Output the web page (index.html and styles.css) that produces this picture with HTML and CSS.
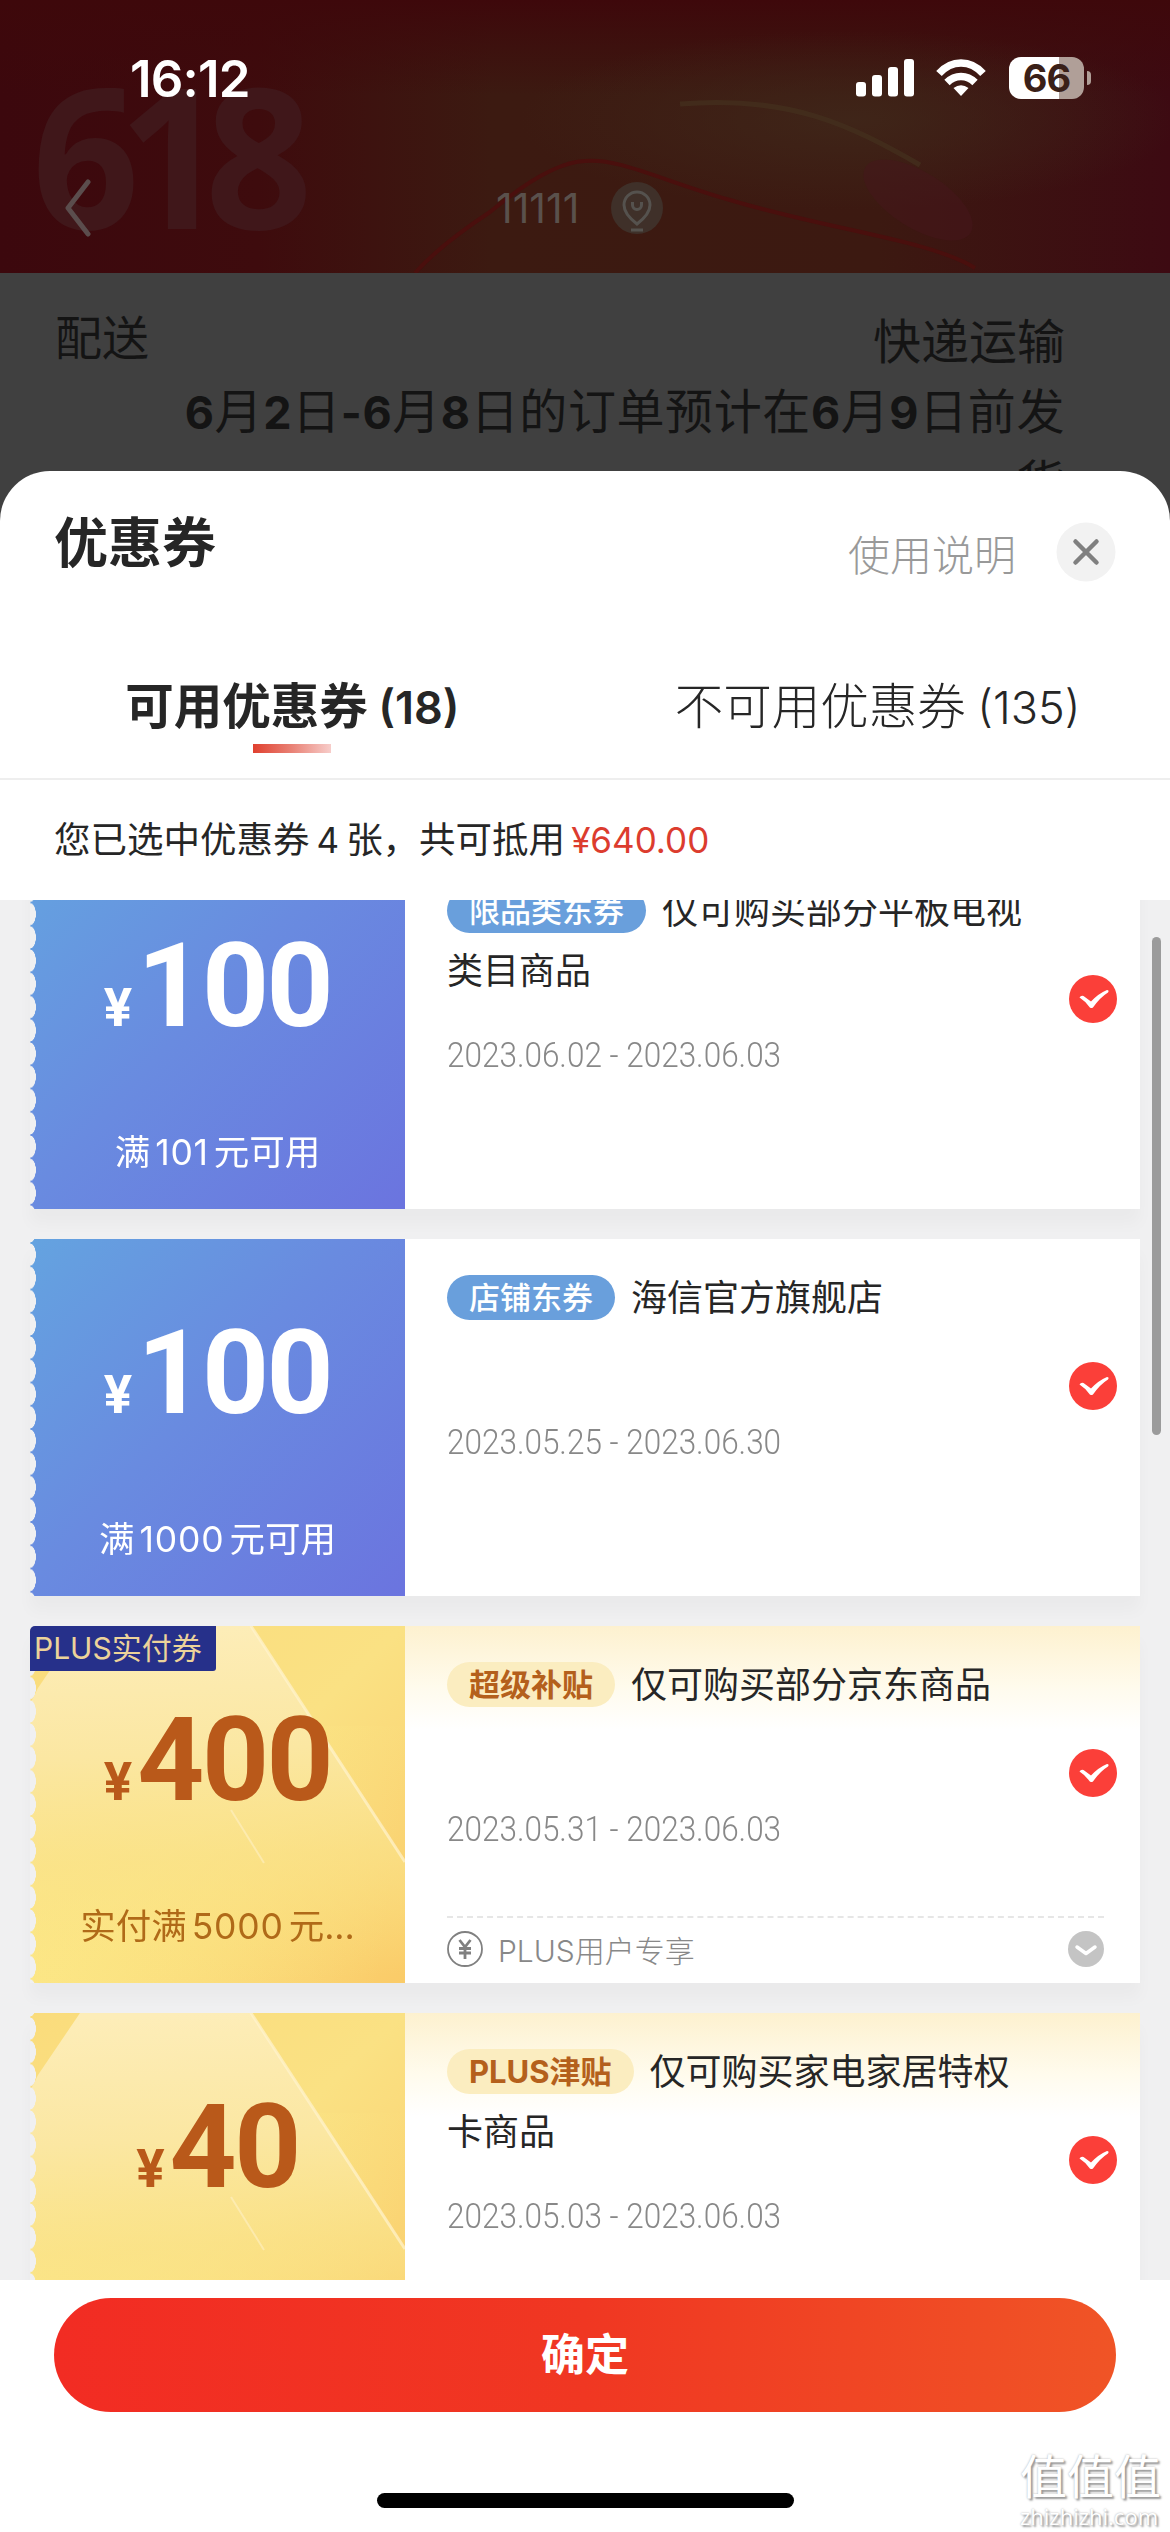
FILE: index.html
```html
<!DOCTYPE html>
<html lang="zh-CN">
<head>
<meta charset="utf-8">
<title>优惠券</title>
<link rel="stylesheet" href="styles.css">
</head>
<body>
<svg width="0" height="0" class="defs">
  <defs>
    <linearGradient id="gold" x1="0" y1="0" x2="1" y2="1"><stop offset="0" stop-color="#fadc7c"/><stop offset=".5" stop-color="#fae183"/><stop offset="1" stop-color="#facb68"/></linearGradient>
    <linearGradient id="beam" x1=".45" y1="0" x2=".5" y2="1"><stop offset="0" stop-color="#fdedb8"/><stop offset=".35" stop-color="#fbe7a2"/><stop offset=".65" stop-color="#fae28a" stop-opacity=".7"/><stop offset="1" stop-color="#fbe482" stop-opacity="0"/></linearGradient>
    <linearGradient id="low" x1="0" y1=".2" x2="1" y2=".3"><stop offset="0" stop-color="#fce786"/><stop offset=".4" stop-color="#fce684" stop-opacity=".6"/><stop offset="1" stop-color="#fce684" stop-opacity="0"/></linearGradient>
    <symbol id="check" viewBox="0 0 48 48"><circle cx="24" cy="24" r="24" fill="#fb3f39"/><path d="M10.500 22.500Q12 20 14.500 21L22 26.500Q29.500 18.500 38 15Q40.500 15 39 17.500Q31 22.500 24 32.500Q21.500 34 20 31.500Q16 26 10.500 22.500Z" fill="#fff"/></symbol>
    <symbol id="goldart" viewBox="0 0 375 357" preserveAspectRatio="none">
      <rect width="375" height="357" fill="url(#gold)"/><rect y="100" width="375" height="257" fill="url(#low)"/>
      <path d="M50 0H221L375 236V357H0V78L8 62Z" fill="url(#beam)"/>
      <path d="M221 0L375 236" stroke="#fff3cf" stroke-opacity=".7" stroke-width="3" fill="none"/>
      <path d="M201 184L234 237" stroke="#fff3cf" stroke-opacity=".5" stroke-width="2" fill="none"/>
    </symbol>
  </defs>
</svg>

<header class="top">
  <svg class="art" width="1170" height="273" viewBox="0 0 1170 273">
    <defs>
      <linearGradient id="red" x1="0" y1="0" x2="1" y2="0"><stop offset="0" stop-color="#3c080d"/><stop offset=".22" stop-color="#3e0b0d"/><stop offset=".42" stop-color="#3c1a11"/><stop offset=".75" stop-color="#3c1911"/><stop offset="1" stop-color="#3d0a12"/></linearGradient>
      <linearGradient id="shade" x1="0" y1="0" x2="0" y2="1"><stop offset="0" stop-color="#3e080b"/><stop offset=".35" stop-color="#3e080b" stop-opacity="0"/></linearGradient>
      <radialGradient id="glow"><stop offset="0" stop-color="#40291b" stop-opacity=".75"/><stop offset="1" stop-color="#40291b" stop-opacity="0"/></radialGradient>
    </defs>
    <rect width="1170" height="273" fill="url(#red)"/>
    <rect width="1170" height="273" fill="url(#shade)"/>
    <ellipse cx="850" cy="120" rx="330" ry="90" fill="url(#glow)"/>
    <path d="M415 273Q440 245 490 212Q550 162 585 161C620 158 660 180 730 200C830 230 930 240 975 268" fill="none" stroke="#4a0f0d" stroke-width="4"/>
    <path d="M680 104C790 95 850 125 920 165" fill="none" stroke="#44301e" stroke-width="5" stroke-opacity=".7"/>
    <ellipse cx="918" cy="200" rx="62" ry="28" fill="#45161b" opacity=".5" transform="rotate(32 918 200)"/>
  </svg>
  <div class="promo">618</div>
  <div class="status">
    <span class="time">16:12</span>
    <span class="sys">
      <svg width="58" height="38" viewBox="0 0 58 38" fill="#fff"><rect y="23" width="10" height="14.500" rx="3"/><rect x="16" y="16" width="10" height="21.500" rx="3"/><rect x="32" y="8" width="10" height="29.500" rx="3"/><rect x="48" width="10" height="37.500" rx="3"/></svg>
      <svg class="wifi" width="50" height="38" viewBox="0 0 50 38" fill="none" stroke="#fff" stroke-width="7.500"><path d="M3 14.500Q12.500 4 25 4T47 14.500"/><path d="M11 23.500Q17 17.500 25 17.500T39 23.500"/><path d="M25 37L17.500 29Q25 23.500 32.500 29Z" fill="#fff" stroke="none"/></svg>
      <span class="battery">66</span><i class="cap"></i>
    </span>
  </div>
  <div class="nav">
    <svg width="26" height="58" viewBox="0 0 26 58" fill="none" stroke="#5b4d4d" stroke-width="5" stroke-linecap="round" stroke-linejoin="round"><path d="M23 3L3 29L23 55"/></svg>
    <div class="place"><span>11111</span>
      <svg width="54" height="54" viewBox="0 0 54 54" fill="none" stroke="#55524e" stroke-width="3"><circle cx="27" cy="27" r="26" fill="#3f3029" stroke="none"/><path d="M27 43Q14 33 14 24A13 13 0 0 1 40 24Q40 33 27 43Z"/><path d="M22.500 21V24A4.500 4.500 0 0 0 31.500 24V21M21 49H33"/></svg>
    </div>
  </div>
</header>

<section class="delivery">
  <div class="row"><span class="lbl">配送</span><span>快递运输</span></div>
  <p><b>6</b>月<b>2</b>日<b>-6</b>月<b>8</b>日的订单预计在<b>6</b>月<b>9</b>日前发<br>货</p>
</section>

<main class="sheet">
  <div class="head">
    <h1>优惠券</h1>
    <span class="help">使用说明</span>
    <svg width="60" height="60" viewBox="0 0 60 60"><circle cx="30" cy="30" r="29.500" fill="#f2f2f2"/><path d="M19.500 19.500L40.500 40.500M40.500 19.500L19.500 40.500" stroke="#808080" stroke-width="4.500" stroke-linecap="round"/></svg>
  </div>
  <nav class="tabs">
    <div class="tab on"><span>可用优惠券<i> (18)</i></span></div>
    <div class="tab"><span>不可用优惠券<i> (135)</i></span></div>
  </nav>
  <p class="sum">您已选中优惠券<i>4</i>张，共可抵用<em>¥640.00</em></p>

  <div class="list">
    <article class="card">
      <div class="face blue"><div class="money"><small>¥</small>100</div><div class="cond">满<i>101</i>元可用</div></div>
      <div class="info">
        <h2><span class="tag">限品类东券</span>仅可购买部分平板电视<br>类目商品</h2>
        <p class="date"><span>2023.06.02 - 2023.06.03</span></p>
        <svg class="pick"><use href="#check"/></svg>
      </div>
    </article>
    <article class="card">
      <div class="face blue"><div class="money"><small>¥</small>100</div><div class="cond">满<i>1000</i>元可用</div></div>
      <div class="info">
        <h2><span class="tag">店铺东券</span>海信官方旗舰店</h2>
        <p class="date"><span>2023.05.25 - 2023.06.30</span></p>
        <svg class="pick"><use href="#check"/></svg>
      </div>
    </article>
    <article class="card plus">
      <div class="face gold"><svg class="goldbg"><use href="#goldart"/></svg><div class="money"><small>¥</small>400</div><div class="cond">实付满<i>5000</i>元...</div></div>
      <span class="ribbon">PLUS实付券</span>
      <div class="info">
        <h2><span class="tag">超级补贴</span>仅可购买部分京东商品</h2>
        <p class="date"><span>2023.05.31 - 2023.06.03</span></p>
        <svg class="pick"><use href="#check"/></svg>
        <div class="member">
          <svg width="36" height="36" viewBox="0 0 36 36" fill="none" stroke="#808080"><circle cx="18" cy="18" r="17" stroke-width="1.800"/><path d="M12.500 9L18 16L23.500 9M12 17.500H24M12 22H24M18 16V28" stroke-width="2.800"/></svg>
          <span>PLUS用户专享</span>
          <svg width="36" height="36" viewBox="0 0 36 36"><circle cx="18" cy="18" r="18" fill="#c4c4c4"/><path d="M9 16L18 22.500L27 16" fill="none" stroke="#fff" stroke-width="3.500" stroke-linecap="round" stroke-linejoin="round"/></svg>
        </div>
      </div>
    </article>
    <article class="card plus">
      <div class="face gold"><svg class="goldbg"><use href="#goldart"/></svg><div class="money"><small>¥</small>40</div><div class="cond">满<i>400</i>元可用</div></div>
      <div class="info">
        <h2><span class="tag">PLUS津贴</span>仅可购买家电家居特权<br>卡商品</h2>
        <p class="date"><span>2023.05.03 - 2023.06.03</span></p>
        <svg class="pick"><use href="#check"/></svg>
      </div>
    </article>
    <i class="scroll"></i>
  </div>

  <footer class="foot">
    <button class="ok">确定</button>
    <i class="home"></i>
    <div class="mark"><b>值值值</b><span>zhizhizhi.com</span></div>
  </footer>
</main>
</body>
</html>
```
FILE: styles.css
```css
* { box-sizing: border-box; margin: 0; padding: 0; }
i, em { font-style: normal; }
body { width: 1170px; height: 2532px; overflow: hidden; background: #404040; color: #262626; font-family: Inter, "Noto Sans CJK SC", sans-serif; }
.defs { position: absolute; }

.top { position: relative; height: 273px; overflow: hidden; }
.art { position: absolute; left: 0; top: 0; }
.promo { position: absolute; left: 32px; top: 58px; font: 700 196px/190px "Open Sans", sans-serif; letter-spacing: -22px; color: #40171a; transform: scaleX(.96); transform-origin: left; }
.status { position: relative; display: flex; justify-content: space-between; align-items: center; height: 156px; padding: 0 79px 0 130px; color: #fff; }
.time { font-weight: 600; font-size: 51px; letter-spacing: -.8px; }
.sys { display: flex; align-items: center; }
.wifi { margin: 0 23px 0 22px; }
.battery { width: 75px; height: 42px; border-radius: 12px; background: linear-gradient(90deg, #fff 67%, #b09f98 67%); color: #3a2018; font-weight: 700; font-size: 38px; line-height: 42px; text-align: center; letter-spacing: -1px; }
.cap { width: 4px; height: 14px; margin-left: 3px; border-radius: 0 5px 5px 0; background: #b09f98; }
.nav { position: relative; display: flex; align-items: center; height: 104px; padding-left: 65px; }
.place { display: flex; align-items: center; gap: 31px; margin-left: 405px; font: 400 41px/50px Inter, sans-serif; color: #5a514c; }
.place span { letter-spacing: 0; }

.delivery { height: 198px; padding: 34px 105px 0 55px; overflow: hidden; color: #141414; font-size: 48px; line-height: 70px; text-align: right; }
.row { display: flex; justify-content: space-between; }
.lbl { margin-top: -4px; font-size: 47px; }
.delivery b { font-weight: 700; font-size: 45px; }
.delivery p { letter-spacing: .6px; white-space: nowrap; }

.sheet { display: flex; flex-direction: column; height: 2061px; border-radius: 50px 50px 0 0; background: #fff; overflow: hidden; }
.head { display: flex; align-items: center; height: 162px; padding: 0 54px 0 54px; }
.head h1 { flex: 1; font-weight: 700; font-size: 54px; line-height: 80px; margin-top: -16px; }
.help { margin-right: 40px; font-weight: 300; font-size: 42px; color: #999; }
.tabs { display: flex; height: 147px; border-bottom: 2px solid #eee; }
.tab { position: relative; flex: 1; text-align: center; font-size: 48.5px; line-height: 148px; font-weight: 300; white-space: nowrap; }
.tab i { font-size: 45px; margin-left: -1px; }
.on { font-weight: 700; }
.on i { font-weight: 600; }
.on::after { content: ""; position: absolute; left: 253px; top: 111px; width: 78px; height: 9px; background: linear-gradient(90deg, #e0402f, #e98276 50%, #f7cdca); }
.sum { height: 120px; padding-left: 54px; font-size: 36.5px; line-height: 121px; white-space: nowrap; }
.sum i { font-size: 35px; margin: 0 7px; }
.sum em { margin-left: 6px; font-size: 35px; color: #dc3c2e; }

.list { position: relative; height: 1380px; padding: 0 30px; overflow: hidden; background: #f0f0f1; }
.card { position: relative; display: flex; height: 357px; margin-bottom: 30px; box-shadow: 0 15px 15px rgba(0,0,0,.028); }
.card:first-child { margin-top: -48px; }
.face { position: relative; width: 375px; padding-top: 60px; text-align: center; color: #fff; -webkit-mask: radial-gradient(ellipse 6px 11.5px at 0 50%, transparent 94%, #000 100%) 0 4px / 100% 23.25px repeat-y; mask: radial-gradient(ellipse 6px 11.5px at 0 50%, transparent 94%, #000 100%) 0 4px / 100% 23.25px repeat-y; }
.blue { background: linear-gradient(133deg, #64a3e0, #698be0 45%, #6b74df); }
.gold { color: #b9591a; }
.goldbg { position: absolute; left: 0; top: 0; width: 375px; height: 357px; }
.money { position: relative; font: 700 117px/148px Roboto, sans-serif; letter-spacing: -2.5px; }
.money small { font-size: 53px; letter-spacing: 5px; }
.cond { position: relative; margin-top: 51px; font-size: 35.5px; line-height: 40px; white-space: nowrap; }
.cond i { margin: 0 5px; letter-spacing: .8px; }
.gold .cond { color: #b06a18; }
.info { position: relative; flex: 1; padding: 29px 36px 0 42px; background: #fff; }
.plus .info { background: linear-gradient(#fdf1cf, rgba(255,250,232,.8) 17%, #fff 29%) #fff; }
.info h2 { height: 130px; font-weight: 400; font-size: 36px; line-height: 60px; white-space: nowrap; }
.tag { display: inline-block; height: 45px; margin-right: 16px; padding: 0 22px; border-radius: 23px; vertical-align: 0; background: #699fdc; color: #fff; font-weight: 500; font-size: 31px; line-height: 45px; vertical-align: 2px; }
.plus .tag { background: #fbedc0; color: #b4601c; font-weight: 700; }
.date { height: 40px; margin-top: 25px; font: 300 35px/40px Roboto, sans-serif; color: #888; white-space: nowrap; }
.date span { display: inline-block; transform: scaleX(.9); transform-origin: left; }
.pick { position: absolute; left: 664px; top: 123px; width: 48px; height: 48px; }
.ribbon { position: absolute; left: 0; top: 0; width: 186px; height: 45px; padding-left: 4px; border-radius: 5px 0 3px; background: #26308a; color: #ecd39a; font-size: 30px; line-height: 45px; white-space: nowrap; }
.member { display: flex; align-items: center; height: 63px; margin-top: 66px; border-top: 2px dashed #e6e6e6; font-size: 30px; color: #888; font-weight: 300; }
.member span { flex: 1; margin-left: 15px; }
.scroll { position: absolute; left: 1152px; top: 37px; width: 9px; height: 498px; border-radius: 5px; background: #9b9b9b; }

.foot { position: relative; display: flex; flex-direction: column; align-items: center; height: 252px; padding-top: 18px; }
.ok { width: 1062px; height: 114px; border: 0; border-radius: 57px; background: linear-gradient(90deg, #f22c23, #f03722 50%, #f05426); color: #fff; font: 700 44px/114px Inter, "Noto Sans CJK SC", sans-serif; }
.home { width: 417px; height: 15px; margin-top: 81px; border-radius: 8px; background: #000; }
.mark { position: absolute; left: 1020px; bottom: 4px; width: 142px; color: #fff; text-shadow: 2px 2px 2px #999, 0 0 2px #aaa; }
.mark b { display: block; font-size: 47px; line-height: 54px; font-weight: 400; white-space: nowrap; }
.mark span { display: block; font: 400 22px/24px "Open Sans", sans-serif; white-space: nowrap; }
```
